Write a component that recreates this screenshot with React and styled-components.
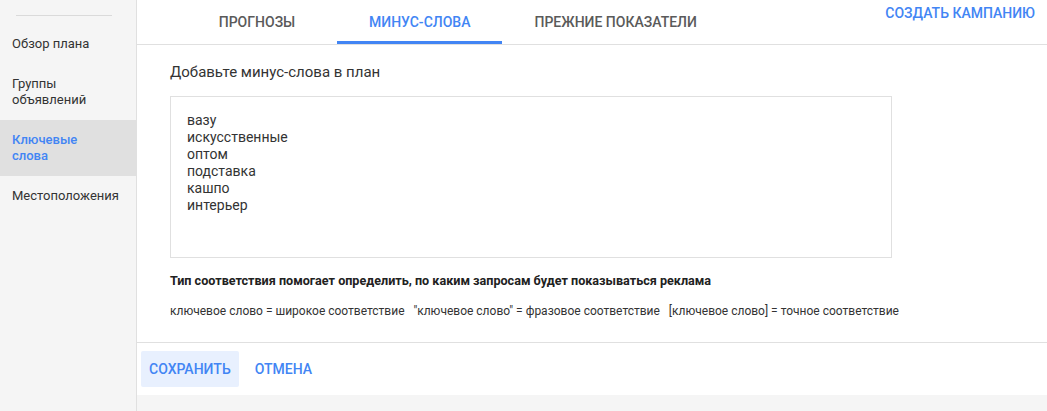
import React from "react"
import styled, { createGlobalStyle } from "styled-components"

const GlobalStyle = createGlobalStyle`
  html, body {
    margin: 0;
    padding: 0;
    height: 100%;
    background: #f5f5f5;
    font-family: Roboto, "Noto Sans", sans-serif;
  }
  #root {
    height: 100%;
  }
`

const Layout = styled.div`
  display: flex;
  height: 100vh;
  width: 100%;
  overflow: hidden;
`
const Sidebar = styled.nav`
  width: 136px;
  flex-shrink: 0;
  background: #f5f5f5;
  border-right: 1px solid #e0e0e0;
  padding-top: 15px;
`
const SideDivider = styled.div`
  height: 1px;
  margin: 0 24px 8px 16px;
  background: #dadada;
`
const SideItem = styled.div`
  padding: 12px 12px;
  font-size: 13px;
  line-height: 16px;
  color: ${p => (p.$active ? "#4285f4" : "#333")};
  font-weight: ${p => (p.$active ? 500 : 400)};
  background: ${p => (p.$active ? "#e0e0e0" : "transparent")};
`
const Main = styled.div`
  flex: 1;
  display: flex;
  flex-direction: column;
`
const Panel = styled.div`
  background: #fff;
`
const Header = styled.div`
  display: flex;
  align-items: flex-start;
  height: 44px;
  padding-left: 40px;
  border-bottom: 1px solid #e0e0e0;
`
const Tab = styled.div`
  box-sizing: border-box;
  min-width: 160px;
  height: 44px;
  padding: 3px 32px 0;
  display: flex;
  align-items: center;
  justify-content: center;
  font-size: 14px;
  font-weight: 500;
  color: ${p => (p.$active ? "#4285f4" : "#5a5a5a")};
  border-bottom: 3px solid ${p => (p.$active ? "#4285f4" : "transparent")};
`
const CreateLink = styled.div`
  margin-left: auto;
  padding: 5px 12px 0 0;
  font-size: 14px;
  font-weight: 500;
  color: #4285f4;
`
const Content = styled.div`
  padding: 17px 0 23px 33px;
`
const Title = styled.div`
  font-size: 15px;
  line-height: 20px;
  color: #333;
`
const WordsBox = styled.div`
  box-sizing: border-box;
  width: 722px;
  height: 162px;
  margin-top: 14px;
  border: 1px solid #e0e0e0;
  padding: 15px 16px;
  font-size: 14px;
  line-height: 17px;
  color: #333;
`
const Hint = styled.div`
  margin-top: 15px;
  font-size: 12.6px;
  line-height: 16px;
  font-weight: 700;
  color: #212121;
`
const Legend = styled.div`
  margin-top: 14px;
  font-size: 12px;
  line-height: 16px;
  color: #333;
  white-space: pre;
`
const Footer = styled.div`
  display: flex;
  gap: 8px;
  padding: 8px 4px;
  border-top: 1px solid #e0e0e0;
`
const Button = styled.div`
  height: 36px;
  padding: 0 8px;
  display: flex;
  align-items: center;
  border-radius: 2px;
  font-size: 14px;
  font-weight: 500;
  color: #4285f4;
  background: ${p => (p.$primary ? "#e8f0fe" : "transparent")};
`

const words = ["вазу", "искусственные", "оптом", "подставка", "кашпо", "интерьер"]

export default function App() {
  return (
    <>
      <GlobalStyle />
      <Layout>
        <Sidebar>
          <SideDivider />
          <SideItem>Обзор плана</SideItem>
          <SideItem>Группы<br />объявлений</SideItem>
          <SideItem $active>Ключевые<br />слова</SideItem>
          <SideItem>Местоположения</SideItem>
        </Sidebar>
        <Main>
          <Panel>
            <Header>
              <Tab>ПРОГНОЗЫ</Tab>
              <Tab $active>МИНУС-СЛОВА</Tab>
              <Tab>ПРЕЖНИЕ ПОКАЗАТЕЛИ</Tab>
              <CreateLink>СОЗДАТЬ КАМПАНИЮ</CreateLink>
            </Header>
            <Content>
              <Title>Добавьте минус-слова в план</Title>
              <WordsBox>
                {words.map(w => (
                  <div key={w}>{w}</div>
                ))}
              </WordsBox>
              <Hint>Тип соответствия помогает определить, по каким запросам будет показываться реклама</Hint>
              <Legend>
                {'ключевое слово = широкое соответствие   "ключевое слово" = фразовое соответствие   [ключевое слово] = точное соответствие'}
              </Legend>
            </Content>
            <Footer>
              <Button $primary>СОХРАНИТЬ</Button>
              <Button>ОТМЕНА</Button>
            </Footer>
          </Panel>
        </Main>
      </Layout>
    </>
  )
}
